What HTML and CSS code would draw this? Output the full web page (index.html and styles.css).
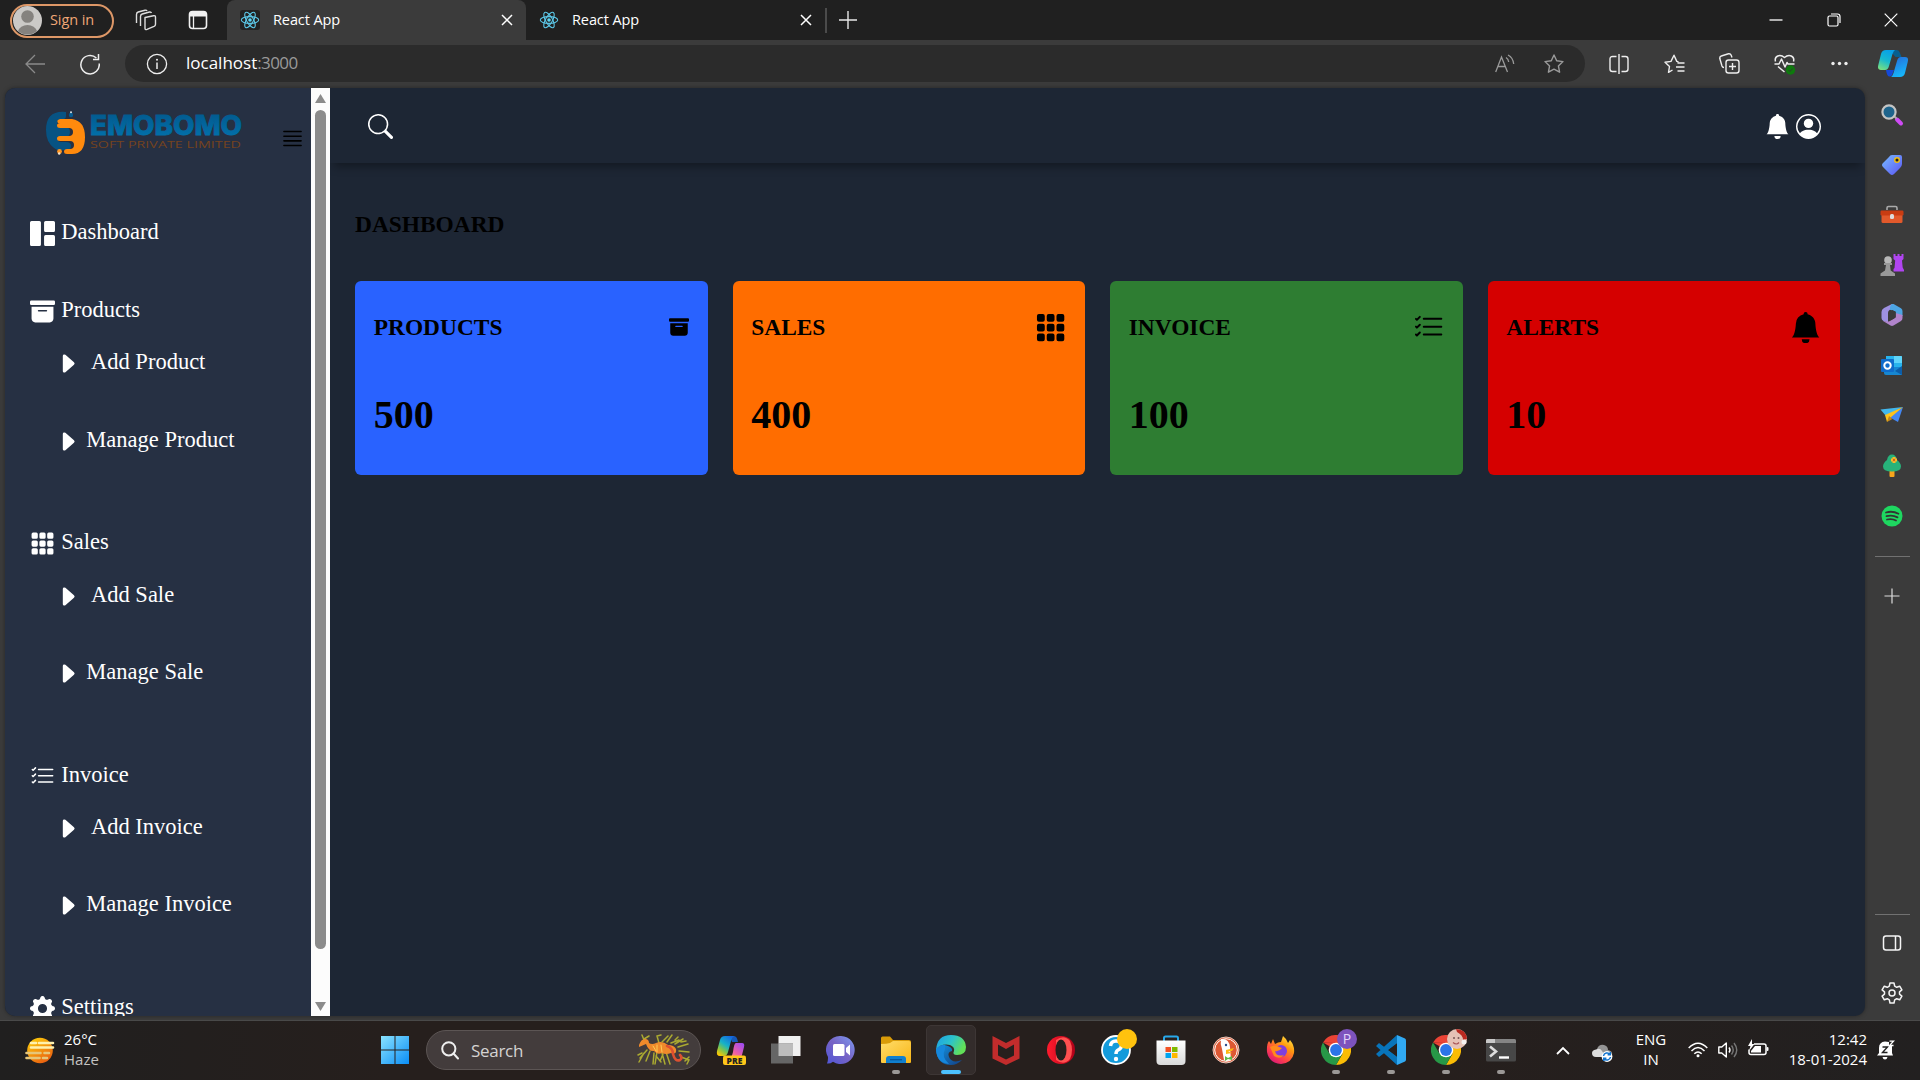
FILE: index.html
```html
<!DOCTYPE html>
<html lang="en">
<head>
<meta charset="utf-8">
<title>React App</title>
<link rel="stylesheet" href="styles.css">
</head>
<body>
<svg class="defs" width="0" height="0" aria-hidden="true">
  <defs>
    <linearGradient id="g-win" x2="1" y2="1"><stop stop-color="#8ae3ff"/><stop offset="1" stop-color="#0a8df5"/></linearGradient>
    <linearGradient id="g-teal" x1=".6" x2=".2" y2="1"><stop stop-color="#08a0e9"/><stop offset=".5" stop-color="#17b9cf"/><stop offset="1" stop-color="#7ae07f"/></linearGradient>
    <linearGradient id="g-blue" x2=".4" y2="1"><stop stop-color="#2668d8"/><stop offset="1" stop-color="#17b5fa"/></linearGradient>
    <linearGradient id="g-pre1" x1=".8" x2=".2" y2="1"><stop stop-color="#1466e0"/><stop offset=".45" stop-color="#16b2c8"/><stop offset=".7" stop-color="#75c455"/><stop offset="1" stop-color="#ffc800"/></linearGradient>
    <linearGradient id="g-pre2" x1=".8" x2=".1" y2="1"><stop stop-color="#a04cf0"/><stop offset=".6" stop-color="#ee5fa4"/><stop offset="1" stop-color="#ff9a6b"/></linearGradient>
    <linearGradient id="g-tag" x2="1" y2="1"><stop stop-color="#78bdff"/><stop offset="1" stop-color="#5b54f4"/></linearGradient>
    <linearGradient id="g-sun" x2=".6" y2="1"><stop stop-color="#ffd60a"/><stop offset="1" stop-color="#ea6210"/></linearGradient>
    <linearGradient id="g-chat" x1="1" x2="0" y2="1"><stop stop-color="#7c9bf2"/><stop offset=".5" stop-color="#7763c5"/><stop offset="1" stop-color="#4f56d8"/></linearGradient>
    <linearGradient id="g-folder" x2="1" y2="1"><stop stop-color="#ffdc6a"/><stop offset="1" stop-color="#f8b616"/></linearGradient>
    <linearGradient id="g-edge" x2="1" y2=".4"><stop stop-color="#1c9fe8"/><stop offset=".55" stop-color="#2dc3c9"/><stop offset="1" stop-color="#62e058"/></linearGradient>
    <linearGradient id="g-edge2" x2="1" y2="1"><stop stop-color="#1596e2"/><stop offset="1" stop-color="#123f85"/></linearGradient>
    <linearGradient id="g-opera" x2="1"><stop stop-color="#ff1b2d"/><stop offset="1" stop-color="#b00018"/></linearGradient>
    <linearGradient id="g-fox" x1=".9" x2=".2" y2="1"><stop stop-color="#fff04a"/><stop offset=".35" stop-color="#ff980e"/><stop offset=".7" stop-color="#ff3f4c"/><stop offset="1" stop-color="#d4147c"/></linearGradient>
    <linearGradient id="g-store" x2="0" y2="1"><stop stop-color="#fff"/><stop offset="1" stop-color="#dadada"/></linearGradient>
    <linearGradient id="g-logo" x2="0" y2="1"><stop stop-color="#02568a"/><stop offset="1" stop-color="#0275b0"/></linearGradient>

    <symbol id="react" viewBox="0 0 20 20"><g fill="none" stroke="#5cc8e8" stroke-width="1.1"><ellipse cx="10" cy="10" rx="8.7" ry="3.4"/><ellipse cx="10" cy="10" rx="8.7" ry="3.4" transform="rotate(60 10 10)"/><ellipse cx="10" cy="10" rx="8.7" ry="3.4" transform="rotate(120 10 10)"/></g><circle cx="10" cy="10" r="1.8" fill="#5cd8f5"/></symbol>
    <symbol id="close" viewBox="0 0 12 12"><path d="M1 1l10 10M11 1L1 11" fill="none" stroke="currentColor" stroke-width="1.5"/></symbol>
    <symbol id="archive" viewBox="0 0 16 16"><path d="M12.643 15C13.979 15 15 13.845 15 12.5V5H1v7.500C1 13.845 2.021 15 3.357 15zM5.500 7h5a.5.5 0 0 1 0 1h-5a.5.5 0 0 1 0-1M.8 1a.8.8 0 0 0-.8.8V3a.8.8 0 0 0 .8.8h14.400A.8.8 0 0 0 16 3V1.800a.8.8 0 0 0-.8-.8z"/></symbol>
    <symbol id="grid" viewBox="0 0 16 16"><path d="M1 2a1 1 0 0 1 1-1h2a1 1 0 0 1 1 1v2a1 1 0 0 1-1 1H2a1 1 0 0 1-1-1zm5 0a1 1 0 0 1 1-1h2a1 1 0 0 1 1 1v2a1 1 0 0 1-1 1H7a1 1 0 0 1-1-1zm5 0a1 1 0 0 1 1-1h2a1 1 0 0 1 1 1v2a1 1 0 0 1-1 1h-2a1 1 0 0 1-1-1zM1 7a1 1 0 0 1 1-1h2a1 1 0 0 1 1 1v2a1 1 0 0 1-1 1H2a1 1 0 0 1-1-1zm5 0a1 1 0 0 1 1-1h2a1 1 0 0 1 1 1v2a1 1 0 0 1-1 1H7a1 1 0 0 1-1-1zm5 0a1 1 0 0 1 1-1h2a1 1 0 0 1 1 1v2a1 1 0 0 1-1 1h-2a1 1 0 0 1-1-1zM1 12a1 1 0 0 1 1-1h2a1 1 0 0 1 1 1v2a1 1 0 0 1-1 1H2a1 1 0 0 1-1-1zm5 0a1 1 0 0 1 1-1h2a1 1 0 0 1 1 1v2a1 1 0 0 1-1 1H7a1 1 0 0 1-1-1zm5 0a1 1 0 0 1 1-1h2a1 1 0 0 1 1 1v2a1 1 0 0 1-1 1h-2a1 1 0 0 1-1-1z"/></symbol>
    <symbol id="listcheck" viewBox="0 0 16 16"><path fill-rule="evenodd" d="M5 11.500a.5.5 0 0 1 .5-.5h9a.5.5 0 0 1 0 1h-9a.5.5 0 0 1-.5-.5m0-4a.5.5 0 0 1 .5-.5h9a.5.5 0 0 1 0 1h-9a.5.5 0 0 1-.5-.5m0-4a.5.5 0 0 1 .5-.5h9a.5.5 0 0 1 0 1h-9a.5.5 0 0 1-.5-.5M3.854 2.146a.5.5 0 0 1 0 .708l-1.500 1.500a.5.5 0 0 1-.708 0l-.5-.5a.5.5 0 1 1 .708-.708L2 3.293l1.146-1.147a.5.5 0 0 1 .708 0m0 4a.5.5 0 0 1 0 .708l-1.500 1.500a.5.5 0 0 1-.708 0l-.5-.5a.5.5 0 1 1 .708-.708L2 7.293l1.146-1.147a.5.5 0 0 1 .708 0m0 4a.5.5 0 0 1 0 .708l-1.500 1.500a.5.5 0 0 1-.708 0l-.5-.5a.5.5 0 0 1 .708-.708l.146.147 1.146-1.147a.5.5 0 0 1 .708 0"/></symbol>
    <symbol id="bell" viewBox="0 0 16 16"><path d="M8 16a2 2 0 0 0 2-2H6a2 2 0 0 0 2 2m.995-14.901a1 1 0 1 0-1.990 0A5 5 0 0 0 3 6c0 1.098-.5 6-2 7h14c-1.500-1-2-5.902-2-7 0-2.420-1.720-4.440-4.005-4.901"/></symbol>
    <symbol id="caret" viewBox="0 0 16 16"><path d="m12.140 8.753-5.482 4.796c-.646.566-1.658.106-1.658-.753V3.204a1 1 0 0 1 1.659-.753l5.480 4.796a1 1 0 0 1 0 1.506z"/></symbol>
    <symbol id="star" viewBox="0 0 20 20"><path d="M10 1l2.700 5.800 6.300.8-4.600 4.300 1.200 6.300L10 15.100l-5.600 3.100 1.200-6.300L1 7.600l6.300-.8z" fill="none" stroke="currentColor" stroke-width="1.400" stroke-linejoin="round"/></symbol>
    <symbol id="chrome" viewBox="0 0 30 30"><path d="M2 7.500A15 15 0 0 1 28 7.500L15 8z" fill="#ea4335"/><path d="M28 7.500A15 15 0 0 1 15 30L21.500 18.700 15 7.500z" fill="#fbbc05"/><path d="M15 30A15 15 0 0 1 2 7.500l6.600 11.300 12.800 0z" fill="#279847"/><path d="M2 7.500h26L15 15z" fill="#ea4335"/><circle cx="15" cy="15" r="7.300" fill="#fff"/><circle cx="15" cy="15" r="5.900" fill="#2b74e8"/></symbol>
  </defs>
</svg>

<div class="screen">
  <header class="tabs">
    <div class="signin"><svg width="29" height="29" viewBox="0 0 29 29"><circle cx="14.500" cy="14.500" r="14.500" fill="#cbc9c7"/><circle cx="14.500" cy="10.500" r="6.300" fill="#85827f"/><path d="M5 25a9.700 7.500 0 0 1 19 0 14.500 14.500 0 0 1-19 0" fill="#85827f"/></svg><span>Sign in</span></div>
    <svg class="workspaces" width="22" height="22" viewBox="0 0 22 22" fill="none" stroke="#ddd" stroke-width="1.400" stroke-linejoin="round"><path d="M10 8.500l8.500-1.800q2-.3 2 1.500v7q0 1.500-1.500 2.200l-7 3q-2 .7-2-1.200zM5.500 17V7.500q0-2 1.700-2.500L14.500 3q1.500-.3 2 1M1.500 14V5.500q0-2 1.700-2.500L10 1.200q1.500-.3 2 .8"/></svg>
    <svg class="tabmenu" width="20" height="20" viewBox="0 0 20 20"><rect x="1.500" y="1.500" width="17" height="17" rx="3" fill="none" stroke="#f2f2f2" stroke-width="1.600"/><path d="M1.500 6.500V4q0-2.500 2.500-2.500h12q2.500 0 2.500 2.500v2.500z" fill="#f2f2f2"/><path d="M5.500 6v12" stroke="#f2f2f2" stroke-width="1.300"/></svg>
    <div class="tab active"><svg class="favicon boxed"><use href="#react"/></svg><span>React App</span><svg class="x"><use href="#close"/></svg></div>
    <div class="tab"><svg class="favicon"><use href="#react"/></svg><span>React App</span><svg class="x"><use href="#close"/></svg></div>
    <i class="tabsep"></i>
    <svg class="newtab" width="18" height="18" viewBox="0 0 18 18"><path d="M9 0v18M0 9h18" stroke="#e8e8e8" stroke-width="1.400"/></svg>
    <div class="winbtns">
      <svg viewBox="0 0 14 14"><path d="M.5 7h13" stroke="#fff" stroke-width="1.300"/></svg>
      <svg viewBox="0 0 14 14" fill="none" stroke="#fff" stroke-width="1.200"><rect x="1" y="3" width="10" height="10" rx="1.500"/><path d="M4 1h6.500Q13 1 13 3.500V10"/></svg>
      <svg viewBox="0 0 14 14"><path d="M.7.7l12.600 12.600M13.300.7L.7 13.300" stroke="#fff" stroke-width="1.200"/></svg>
    </div>
  </header>

  <div class="toolbar">
    <svg class="back" width="20" height="20" viewBox="0 0 20 20" fill="none" stroke="#8a8a8a" stroke-width="1.300"><path d="M20 10H1M10 1l-9 9 9 9"/></svg>
    <svg class="reload" width="20" height="22" viewBox="0 0 20 22" fill="none" stroke="#eee" stroke-width="1.500"><path d="M19.200 10.500A9.200 9.200 0 1 1 16.400 5M18.500 1v5.500H13"/></svg>
    <div class="address">
      <svg class="info" width="22" height="22" viewBox="0 0 22 22"><circle cx="11" cy="11" r="9.600" fill="none" stroke="#eee" stroke-width="1.300"/><path d="M11 9.500V16" stroke="#eee" stroke-width="1.500"/><circle cx="11" cy="6.800" r="1" fill="#eee"/></svg>
      <span class="host">localhost</span><span class="port">:3000</span>
      <svg class="read" width="20" height="20" viewBox="0 0 20 20" fill="none" stroke="#9a9a9a" stroke-width="1.300"><path d="M.7 18L6.500 3l6 15M2.700 12.500h7.600M11 3.500q2.500 1.500 2.700 4.500M13 1q5 2.500 5.700 9"/></svg>
      <svg class="addstar"><use href="#star"/></svg>
    </div>
    <svg class="split" width="20" height="20" viewBox="0 0 20 20" fill="none" stroke="#eee" stroke-width="1.400"><path d="M7.500 2.500H3.500Q1 2.500 1 5v10q0 2.500 2.500 2.500h4M12.500 2.500h4Q19 2.500 19 5v10q0 2.500-2.500 2.500h-4M10 0v20"/></svg>
    <svg class="favs" width="21" height="20" viewBox="0 0 21 20" fill="none" stroke="#eee" stroke-width="1.400" stroke-linejoin="round"><path d="M8.500 16L4.500 18.300l1-5.800-4.500-4.300 6-.8L10 1.200l2.800 6.200 1.700.3M13.500 9H20.500M12 13h8.500M13.500 17h7"/></svg>
    <svg class="coll" width="21" height="21" viewBox="0 0 21 21" fill="none" stroke="#eee" stroke-width="1.400"><rect x="7" y="7" width="13" height="13" rx="2.500"/><path d="M13.500 10v7M10 13.500h7M5 14.500q-1.500 0-2-1.500L.8 5.500Q.5 3.500 2.300 3L9.500.8q2-.3 2.700 1.400l.8 2.300"/></svg>
    <svg class="health" width="22" height="22" viewBox="0 0 22 22" fill="none" stroke="#eee" stroke-width="1.500" stroke-linejoin="round"><path d="M1.500 8.500C0 3 6 .5 10.500 4.500 15 .5 21 3 19.500 8.500M.5 11H5l2.500-5 3.500 8 2-4.500 1 1.500h6.500M4 13.500l6.500 5.500"/><circle cx="16.500" cy="17" r="4.700" fill="#0e7a0d" stroke="none"/><path d="M14.500 17l1.500 1.500 2.700-3" stroke="#2b402b" stroke-width="1"/></svg>
    <svg class="dots" width="17" height="5" viewBox="0 0 17 5" fill="#eee"><circle cx="2" cy="2.500" r="1.700"/><circle cx="8.500" cy="2.500" r="1.700"/><circle cx="15" cy="2.500" r="1.700"/></svg>
    <svg class="copilot" width="30" height="27" viewBox="0 0 30 27"><path d="M16 0h3q2 0 3 3l1.500 4h-6L14 3z" fill="#075f8f"/><path d="M8 20h8l-2 5q-1 2-3 1.500Q9 26 8 20" fill="#1549d8"/><path d="M8 0h9q-1.500 1-2.500 4L11 16q-1 4-4 4H3q-4 0-2.700-5L3 4Q4 0 8 0" fill="url(#g-teal)"/><path d="M22 27h-9q1.500-1 2.500-4L19 11q1-4 4-4h4q4 0 2.700 5L27 23q-1 4-5 4" fill="url(#g-blue)"/></svg>
  </div>

  <div class="body">
    <div class="page">
      <aside class="sidebar">
        <div class="brand">
          <svg width="198" height="46" viewBox="0 0 198 46">
            <path d="M20 1q-20-2-20 18 0 12 8 18 5 4 9 2h3q5 0 5-4t-5-4h-5q-3 0-3-2.500T15 26h4q5 0 5-5t-5-5h-5q-3 0-3-2.500T14 8q6 1 6-3z" fill="#075383"/>
            <path d="M14 8h12q13 2 13 18 0 17-13 17h-5q-3 0-3-2.500t3-2.500h3q4 0 4-4t-4-4H14q-3 0-3-2.500t3-2.500h9q4 0 4-4t-4-4h-9q-3 0-3-2.500T14 12h-2q-2-3 2-4" fill="#ff8a0d"/>
            <circle cx="25" cy="4" r="2.200" fill="#065b91"/><circle cx="25" cy="1.300" r="1" fill="#dbe7ed"/><circle cx="13.500" cy="40.500" r="2.400" fill="#ff9420"/><circle cx="13.200" cy="42.500" r="1.200" fill="#f5e2c9"/>
            <text class="logo-name" x="44" y="24" textLength="152" lengthAdjust="spacingAndGlyphs" fill="url(#g-logo)" stroke="url(#g-logo)">EMOBOMO</text>
            <text class="logo-sub" x="44" y="36.700" textLength="151" lengthAdjust="spacingAndGlyphs">SOFT PRIVATE LIMITED</text>
          </svg>
          <svg class="burger" viewBox="0 0 16 16"><path d="M2.500 3.500h11M2.500 6.500h11M2.500 9.500h11M2.500 12.500h11" stroke="#000" stroke-linecap="round"/></svg>
        </div>
        <ul class="menu">
          <li class="item"><svg viewBox="0 0 16 16"><path d="M0 1a1 1 0 0 1 1-1h5a1 1 0 0 1 1 1v14a1 1 0 0 1-1 1H1a1 1 0 0 1-1-1zm9 0a1 1 0 0 1 1-1h5a1 1 0 0 1 1 1v5a1 1 0 0 1-1 1h-5a1 1 0 0 1-1-1zm0 9a1 1 0 0 1 1-1h5a1 1 0 0 1 1 1v5a1 1 0 0 1-1 1h-5a1 1 0 0 1-1-1z"/></svg><span>Dashboard</span></li>
          <li class="item first"><svg><use href="#archive"/></svg><span>Products</span></li>
          <li class="item sub add"><svg><use href="#caret"/></svg><span>Add Product</span></li>
          <li class="item sub"><svg><use href="#caret"/></svg><span>Manage Product</span></li>
          <li class="item group"><svg><use href="#grid"/></svg><span>Sales</span></li>
          <li class="item sub add"><svg><use href="#caret"/></svg><span>Add Sale</span></li>
          <li class="item sub"><svg><use href="#caret"/></svg><span>Manage Sale</span></li>
          <li class="item group"><svg><use href="#listcheck"/></svg><span>Invoice</span></li>
          <li class="item sub add"><svg><use href="#caret"/></svg><span>Add Invoice</span></li>
          <li class="item sub"><svg><use href="#caret"/></svg><span>Manage Invoice</span></li>
          <li class="item group"><svg viewBox="0 0 16 16"><path d="M9.405 1.050c-.413-1.400-2.397-1.400-2.810 0l-.1.340a1.464 1.464 0 0 1-2.105.872l-.310-.170c-1.283-.698-2.686.705-1.987 1.987l.169.311c.446.820.023 1.841-.872 2.105l-.340.100c-1.400.413-1.400 2.397 0 2.810l.340.100a1.464 1.464 0 0 1 .872 2.105l-.170.310c-.698 1.283.705 2.686 1.987 1.987l.311-.169a1.464 1.464 0 0 1 2.105.872l.100.340c.413 1.400 2.397 1.400 2.810 0l.100-.340a1.464 1.464 0 0 1 2.105-.872l.310.170c1.283.698 2.686-.705 1.987-1.987l-.169-.311a1.464 1.464 0 0 1 .872-2.105l.340-.100c1.400-.413 1.400-2.397 0-2.810l-.340-.100a1.464 1.464 0 0 1-.872-2.105l.170-.310c.698-1.283-.705-2.686-1.987-1.987l-.311.169a1.464 1.464 0 0 1-2.105-.872zM8 10.930a2.929 2.929 0 1 1 0-5.860 2.929 2.929 0 0 1 0 5.858z"/></svg><span>Settings</span></li>
        </ul>
      </aside>
      <div class="scrollbar"><i class="arrow up"></i><i class="thumb"></i><i class="arrow down"></i></div>
      <section class="content">
        <header class="apphead">
          <svg viewBox="0 0 16 16"><path d="M11.742 10.344a6.500 6.500 0 1 0-1.397 1.398h-.001q.044.060.098.115l3.850 3.850a1 1 0 0 0 1.415-1.414l-3.850-3.850a1 1 0 0 0-.115-.100zM12 6.500a5.500 5.500 0 1 1-11 0 5.500 5.500 0 0 1 11 0"/></svg>
          <div class="userbox">
            <svg><use href="#bell"/></svg>
            <svg viewBox="0 0 16 16"><path d="M11 6a3 3 0 1 1-6 0 3 3 0 0 1 6 0"/><path fill-rule="evenodd" d="M0 8a8 8 0 1 1 16 0A8 8 0 0 1 0 8m8-7a7 7 0 0 0-5.468 11.370C3.242 11.226 4.805 10 8 10s4.757 1.225 5.468 2.370A7 7 0 0 0 8 1"/></svg>
          </div>
        </header>
        <main>
          <h3>DASHBOARD</h3>
          <div class="cards">
            <article class="card blue"><div class="cardhead"><h3>PRODUCTS</h3><svg class="small"><use href="#archive"/></svg></div><h1>500</h1></article>
            <article class="card orange"><div class="cardhead"><h3>SALES</h3><svg><use href="#grid"/></svg></div><h1>400</h1></article>
            <article class="card green"><div class="cardhead"><h3>INVOICE</h3><svg><use href="#listcheck"/></svg></div><h1>100</h1></article>
            <article class="card red"><div class="cardhead"><h3>ALERTS</h3><svg><use href="#bell"/></svg></div><h1>10</h1></article>
          </div>
        </main>
      </section>
    </div>

    <nav class="edgebar">
      <div class="cell"><svg viewBox="0 0 24 24"><path d="M17 16.500l4 4" stroke="#cf4bf5" stroke-width="4" stroke-linecap="round"/><path d="M14 13l2.500 2.500" stroke="#aaa" stroke-width="2"/><circle cx="9" cy="9" r="6.600" fill="#1e648c" stroke="#c4c4c4" stroke-width="2.200"/></svg></div>
      <div class="cell"><svg viewBox="0 0 24 24"><path d="M12 2h8q2 0 2 2v7q0 2-2 4l-6 6q-2 2-4 0l-7-7q-2-2 0-4l6-6q1-2 3-2" fill="url(#g-tag)"/><circle cx="17" cy="7" r="2.300" fill="#222" stroke="#f0bd16" stroke-width="1.500"/></svg></div>
      <div class="cell"><svg viewBox="0 0 24 24"><path d="M7 7V5q0-1.500 1.500-1.500h7Q17 3.500 17 5v2" fill="none" stroke="#aaa" stroke-width="1.600"/><rect x="1.500" y="10" width="21" height="10" rx="1.500" fill="#e2592b"/><rect x=".5" y="7.500" width="23" height="5" rx="1.200" fill="#c93c12"/><rect x="10" y="11" width="4" height="5" rx="1.500" fill="#ddd"/></svg></div>
      <div class="cell"><svg viewBox="0 0 24 24"><path d="M13.500 1h2v2h2V1h2v2h2V1h2v5l-1.500 1.500.7 7L24 17v1.500H13.500V16l1-1 .7-7.500L13.500 6z" fill="#b045f0"/><circle cx="8" cy="7" r="3.800" fill="#b8b8b8"/><path d="M4 10h8v2h-2l.7 5.500 4.300 3V23H.5v-2.500l4.500-3L6 12H4z" fill="#999"/></svg></div>
      <div class="cell"><svg viewBox="0 0 24 24"><path d="M12 1L4 5Q1.500 6.500 1.500 9v6q0 2 2 3l4.500 1.500V10q0-2 1.500-3L16 3.500 13.500 1.200q-.7-.5-1.500-.2" fill="#9e91e2"/><path d="M12 1q1-.3 2 .2l7 4q1.500 1 1.500 3V13l-7-2.500V8.500L10 6.700Q9.500 3 12 1" fill="#4da5e3"/><path d="M22.500 12v3q0 2-1.500 3l-7.500 4.500q-1.500.8-3 0L3 18l5 .5q1 .2 2-.4l5.500-3.300V10z" fill="#b184cc"/><path d="M9 9l3.500-2 3.300 2v5L12 16.500 9 14.500z" fill="#3b3b3b"/></svg></div>
      <div class="cell"><svg viewBox="0 0 24 24"><path d="M6 2h15q1 0 1 1v10H6z" fill="#28b4ed"/><path d="M14 2h7q1 0 1 1v6h-8z" fill="#5fd5fa"/><path d="M4 13h18v8H6q-2 0-2-2z" fill="#1687d2"/><path d="M22 12v9l-7-4z" fill="#0c5eaa"/><rect x="1" y="5" width="13" height="13" rx="1" fill="#0f6ccb"/><circle cx="7.500" cy="11.500" r="3.200" fill="none" stroke="#fff" stroke-width="2"/></svg></div>
      <div class="cell"><svg viewBox="0 0 24 24"><path d="M.5 5.500L23 3 6 12z" fill="#42b7ec"/><path d="M23 3L18 18 9 13z" fill="#4387f2"/><path d="M23 3L5 11l2 7 3-4z" fill="#ffc21a"/><path d="M7 18l2-6 3.500 3z" fill="#bf841c"/></svg></div>
      <div class="cell"><svg viewBox="0 0 24 24"><rect x="9.500" y="16" width="5" height="7" rx="1" fill="#f6a51d"/><path d="M12 .5q4 0 5 5.500 4 3 4 6.500 0 5-9 5t-9-5Q3 9 7 6q1-5.500 5-5.500" fill="#27b27a"/><path d="M14 3v6M11 6h6" stroke="#ffb629" stroke-width="3"/><circle cx="14" cy="6" r="1.200" fill="#c3691c"/></svg></div>
      <div class="cell"><svg viewBox="0 0 24 24"><circle cx="12" cy="12" r="10.500" fill="#1ed760"/><path d="M6 8.500q6.500-2 12.500 1.200M6.500 12.200q6-1.600 11 1.200M7 15.500q5-1.300 9 1" fill="none" stroke="#333" stroke-width="1.800" stroke-linecap="round"/></svg></div>
      <i class="rule"></i>
      <svg class="plus" width="16" height="16" viewBox="0 0 16 16"><path d="M8 .5v15M.5 8h15" stroke="#ddd" stroke-width="1.200"/></svg>
      <div class="edgebottom">
        <i class="rule"></i>
        <div class="cell"><svg viewBox="0 0 24 24" fill="none" stroke="#f5f5f5" stroke-width="1.500"><rect x="3.500" y="5" width="17" height="14" rx="2.500"/><path d="M15.500 5v14"/></svg></div>
        <div class="cell"><svg viewBox="0 0 24 24" fill="none" stroke="#f5f5f5" stroke-width="1.500" stroke-linejoin="round"><circle cx="12" cy="12" r="3"/><path d="M10 2h4l.7 3.200 2 1.100 3-1.100 2.200 3.700-2.400 2v2.200l2.400 2-2.200 3.700-3-1.100-2 1.100L14 22h-4l-.7-3.200-2-1.100-3 1.100-2.200-3.700 2.400-2v-2.200l-2.400-2 2.200-3.700 3 1.100 2-1.100z"/></svg></div>
      </div>
    </nav>
  </div>

  <footer class="taskbar">
    <div class="weather">
      <svg width="30" height="27" viewBox="0 0 30 27"><circle cx="15" cy="13.500" r="12.800" fill="url(#g-sun)"/><g stroke-width="2.600" stroke-linecap="round"><path d="M6 6h5M14 6h14M6 10.500h22" stroke="#fff1ad"/><path d="M1.500 16h14M19.500 16h4.500M1.500 21h13M18 21h4" stroke="#e6c679"/></g></svg>
      <div class="lines"><span>26°C</span><span class="dim">Haze</span></div>
    </div>
    <div class="apps">
      <div class="app"><svg viewBox="0 0 30 30"><path d="M1 1h13.500v13.500H1zM15.500 1H29v13.500H15.500zM1 15.500h13.500V29H1zM15.500 15.500H29V29H15.500z" fill="url(#g-win)"/></svg></div>
      <div class="search">
        <svg width="18" height="19" viewBox="0 0 18 19" fill="none" stroke="#eee" stroke-width="2"><circle cx="7.800" cy="7.800" r="6.600"/><path d="M12.500 12.500l4.500 5" stroke-linecap="round"/></svg>
        <span>Search</span>
        <svg class="dragon" width="54" height="32" viewBox="0 0 54 32" fill="none" stroke-linecap="round"><path d="M7 6L5 1M7 5l5-3M5 19l-4 2M10 16l-7 8M13 17l-4 10M7 19l-5 9M17 19l-1 11M20 18l-2 12M19 22l5 6M25 19l3 11M26 20l-3 7M29 18l4 12M22 9L20 2l4-1M25 8l6-6M30 8l5-7M34 9l8-3M38 10l8-5M41 13l10-3M42 17l10 1M44 23l8 3-2 4M48 27l4-4M38 6l3-3M44 8l5-1" stroke="#aaa931" stroke-width="1.500"/><path d="M2 11q2-6 6-6 4 0 4 4 3 2 7 0 6-3 12 2 6 0 8 4 1 6-5 4-5 2-9 0-5 2-8-2-5 1-8-7l-7 3z" fill="#ef8a2b"/><path d="M30 12q6 2 6 8 2 8 7 6 3-2 0-5" stroke="#dc5030" stroke-width="2.600"/><path d="M16 12l3 5M20 11v7M24 11l1 7" stroke="#ffcb55"/></svg>
      </div>
      <div class="app"><svg viewBox="0 0 30 30"><path d="M14 1h4q3 0 4 6h-6z" fill="#1558b8"/><path d="M9 1h9q-2 1-3 5l-3 11q-1 4-4 4H4q-4 0-3-5L4 5q1-4 5-4" fill="url(#g-pre1)"/><path d="M20 8h6q3 0 2 4l-2 8q-1 4-4 4h-8q2-2 3-7 1-9 3-9" fill="url(#g-pre2)"/><rect x="7" y="20.500" width="23" height="9.500" rx="2" fill="#ffc619"/><text class="pre" x="18.500" y="28.500" text-anchor="middle">PRE</text></svg></div>
      <div class="app"><svg viewBox="0 0 30 30"><rect x="7.500" y="1" width="22" height="20" fill="#f0f0f0"/><rect x="0" y="8.500" width="22" height="20" fill="#666"/><path d="M7.500 8.500H22V21H7.500z" fill="#bdbdbd"/></svg></div>
      <div class="app"><svg viewBox="0 0 30 30"><path d="M15 1a14 14 0 1 1-8 25.700Q4 29 1 28.500q1.200-3 1-6.500A14 14 0 0 1 15 1" fill="url(#g-chat)"/><rect x="7" y="9" width="11.500" height="12" rx="1.500" fill="#fff"/><path d="M20 13l4-3.500v11L20 17z" fill="#fff"/></svg></div>
      <div class="app"><svg viewBox="0 0 30 30"><path d="M0 3q0-1.500 1.500-1.500H9L12 5h16q2 0 2 2v8H0z" fill="#d99b08"/><path d="M0 9q6 0 9-1l3-2h16q2 0 2 2v19q0 1-1 1H1q-1 0-1-1z" fill="url(#g-folder)"/><path d="M5 28v-4q0-3 3-3h14q3 0 3 3v4z" fill="#1080cf"/><path d="M9 24.700h12" stroke="#08569b" stroke-width="1.300"/></svg><i class="dot"></i></div>
      <div class="app current"><svg viewBox="0 0 30 30"><path d="M0 15Q1 0 15 0t15 12q0 8-9 8-5 0-3-4 1-4-4-6-9-2-14 5" fill="url(#g-edge)"/><path d="M0 14q5-6 12-3 5 2 4 5-5 1-3 6 3 7 13 3-5 5-11 5Q1 30 0 14" fill="url(#g-edge2)"/><path d="M9 14q-4 8 4 15-12-1-13-14 3-5 9-5" fill="#1687dc"/></svg><i class="dot"></i></div>
      <div class="app"><svg viewBox="0 0 30 30"><path d="M1.500 1L15 8l13.500-7v22.500L15 30 1.500 23.500zM7 9.500v11l8 4 8-4v-11L15 14z" fill="#c22c2c" fill-rule="evenodd"/></svg></div>
      <div class="app"><svg viewBox="0 0 30 30"><circle cx="15" cy="15" r="14" fill="url(#g-opera)"/><path d="M10 5q8-6 14 1 4 9 0 18-6 7-14 1" fill="#ff5050"/><ellipse cx="15" cy="15" rx="5.500" ry="10.500" fill="#261f1d"/></svg></div>
      <div class="app"><svg viewBox="0 0 30 30"><circle cx="15" cy="15" r="14" fill="#149bdb" stroke="#fff" stroke-width="1.800"/><path d="M9.500 11q.5-5 5.500-5 5.500 0 5.500 4.500 0 3-3.500 4.500-2 1-2 4" fill="none" stroke="#fff" stroke-width="3.500"/><circle cx="15" cy="24" r="2.200" fill="#fff"/></svg><b class="badge yellow"></b></div>
      <div class="app"><svg viewBox="0 0 30 30"><path d="M8 7V3q0-1.500 1.500-1.500h11Q22 1.500 22 3v4" fill="none" stroke="#28a8ea" stroke-width="2"/><path d="M.5 5.500h29V26q0 4-4 4h-21q-4 0-4-4z" fill="url(#g-store)"/><path d="M9.500 12H15v5H9.500z" fill="#f25022"/><path d="M16 12h5.500v5H16z" fill="#7fba00"/><path d="M9.500 18H15v5H9.500z" fill="#00a4ef"/><path d="M16 18h5.500v5H16z" fill="#ffb900"/></svg></div>
      <div class="app"><svg viewBox="0 0 30 30"><circle cx="15" cy="15" r="13" fill="#de5833" stroke="#e8c9bd" stroke-width="1"/><circle cx="15" cy="15" r="11.300" fill="none" stroke="#fff" stroke-width="1"/><path d="M10 4q8-1 9 8l1 13q-5 2-7 0L11 14Q9 9 10 4" fill="#fff"/><path d="M15 15l8-2-2 3h-4l4 2-6 1z" fill="#fdb913"/><path d="M14 21l3 2 4-2v4l-4-1-3 2z" fill="#62b846"/><circle cx="15" cy="10" r="1.200" fill="#2d4f8e"/></svg></div>
      <div class="app"><svg viewBox="0 0 30 30"><path d="M7 4l2 5q3-2 6-2l2-6q4 3 5 7l2-3q5 6 4 13-2 10-13 11Q3 28 1 17 .5 9 3 6l2 3z" fill="url(#g-fox)"/><circle cx="15" cy="16" r="6" fill="#7f3fde"/><path d="M4 12q5-3 9 0l3 1q-3 4-7 3 1 6 9 4-4 5-10 1z" fill="#ff8a1c"/></svg></div>
      <div class="app"><svg><use href="#chrome"/></svg><b class="badge purple">P</b><i class="dot"></i></div>
      <div class="app"><svg viewBox="0 0 30 30"><path d="M3 8l18.500 14v-14L3 22l-3-3L21 0v30L0 11z" fill="#0874ba"/><path d="M21 0l8 3.500q1 .5 1 2v19q0 1.500-1 2L21 30z" fill="#31a9f2"/><path d="M21 8.500v13L12.500 15z" fill="#261f1d"/></svg><i class="dot"></i></div>
      <div class="app"><svg><use href="#chrome"/></svg><b class="badge face"><svg viewBox="0 0 20 20"><circle cx="10" cy="10" r="10" fill="#e5c1b5"/><path d="M9 0q10 0 11 10l-4 1q0-5-6-8" fill="#bb2920"/><circle cx="7" cy="9" r="1" fill="#755"/><circle cx="11.500" cy="9" r="1" fill="#755"/><path d="M6 13.500q3.500 3 6 0" fill="none" stroke="#a55" stroke-width="1.200"/><circle cx="17" cy="13" r="2.500" fill="#f4f0ee"/></svg></b><i class="dot"></i></div>
      <div class="app"><svg viewBox="0 0 30 30"><rect x="0" y="4" width="30" height="22.500" rx="1.500" fill="#474747"/><path d="M0 8V5.500Q0 4 1.500 4h27Q30 4 30 5.500V8z" fill="#858585"/><path d="M0 8V5.500Q0 4 1.500 4H9v4z" fill="#c8c8c8"/><path d="M4 11.500l6 5-6 5" fill="none" stroke="#ddd" stroke-width="2.600"/><path d="M13 22.500h10" stroke="#fff" stroke-width="2.400"/></svg><i class="dot"></i></div>
    </div>
    <div class="tray">
      <svg width="14" height="9" viewBox="0 0 14 9"><path d="M1 8l6-6 6 6" fill="none" stroke="#fff" stroke-width="1.800"/></svg>
      <svg class="cloud" width="21" height="18" viewBox="0 0 21 18"><path d="M5 5q2-5 7-4 4 1 4 5 5 1 4 5l-8 2z" fill="#949494"/><path d="M4 13q-4 0-4-4 0-3 4-3.500Q8 3.500 10 7l4 6z" fill="#ddd"/><circle cx="15" cy="12.500" r="5.400" fill="#fff"/><path d="M11.500 12a3.600 3.600 0 0 1 6.500-1.500M18.500 13a3.600 3.600 0 0 1-6.500 1.500M18.300 8v2.700h-2.700M11.700 17v-2.700h2.700" fill="none" stroke="#1273cd" stroke-width="1.500"/></svg>
      <div class="lines lang"><span>ENG</span><span>IN</span></div>
      <svg class="wifi" width="20" height="16" viewBox="0 0 20 16" fill="none" stroke="#fff" stroke-width="1.500"><path d="M.7 6Q10-3.500 19.300 6M3.500 9Q10 2.200 16.500 9M6.300 11.700q3.700-3.500 7.400 0"/><circle cx="10" cy="13.700" r="1.500" fill="#fff" stroke="none"/></svg>
      <svg class="sound" width="20" height="18" viewBox="0 0 20 18" fill="none" stroke="#fff" stroke-width="1.400" stroke-linejoin="round"><path d="M.8 6v6h3l4.500 4V2L3.800 6zM11 6.500q2 2.500 0 5"/><path d="M13.500 4.500q3.500 4.500 0 9M16 2q5.500 7 0 14" stroke="#777"/></svg>
      <svg class="battery" width="21" height="18" viewBox="0 0 21 18"><path d="M6 5h10q2 0 2 2v6.500q0 2-2 2H3q-2 0-2-2v-3" fill="none" stroke="#fff" stroke-width="1.500"/><path d="M7 7h6v6.500H3V12z" fill="#fff"/><path d="M4 0L0 7h2.500L1 12l5.500-7H4z" fill="#fff"/><rect x="18.500" y="8" width="2" height="4" rx="1" fill="#fff"/></svg>
      <div class="lines clock"><span>12:42</span><span>18-01-2024</span></div>
      <svg class="dnd" width="18" height="20" viewBox="0 0 18 20"><path d="M2 8q0-6 6-6.500l4 .5v4h3v7l1 2.500H0L2 13z" fill="#fff"/><path d="M5.500 17h5q-.5 2.500-2.500 2.500T5.500 17" fill="#fff"/><path d="M5.500 7h5l-5 5.500h5" fill="none" stroke="#222" stroke-width="1.400"/><path d="M12.500 1.200h4l-4 4.300h4" fill="none" stroke="#fff" stroke-width="1.300"/></svg>
    </div>
  </footer>
</div>
</body>
</html>
```

FILE: styles.css
```css
* { box-sizing: border-box; }
body { margin: 0; background: #3b3b3b; font-family: "Open Sans", "Noto Sans", sans-serif; color: #fff; overflow: hidden; }
svg { display: block; flex: none; }
i { display: block; }
.defs { position: absolute; }
.screen { width: 1920px; height: 1080px; display: flex; flex-direction: column; }

/* Tab strip */
.tabs { height: 40px; background: #202020; display: flex; align-items: center; padding-left: 10px; font-size: 14.5px; letter-spacing: -.1px; }
.signin { width: 104px; height: 34px; margin-top: 1px; border: 2px solid #dd9767; border-radius: 17px; display: flex; align-items: center; gap: 8px; padding-left: 1px; color: #efa676; white-space: nowrap; }
.signin span { margin-top: -3px; }
.workspaces { margin-left: 21px; }
.tabmenu { margin-left: 31px; }
.tab { width: 299px; height: 40px; display: flex; align-items: center; padding: 0 13px; }
.tab.active { margin-left: 19px; background: #3b3b3b; border-radius: 8px 8px 0 0; }
.favicon { width: 20px; height: 20px; margin-right: 13px; }
.favicon.boxed { background: #222; border-radius: 3px; }
.tab span { flex: 1; margin-top: -2px; }
.x { width: 12px; height: 12px; }
.tabsep { width: 2px; height: 25px; background: #4b4b4b; }
.newtab { margin-left: 12px; margin-top: -1px; }
.winbtns { margin-left: auto; display: flex; gap: 43.500px; padding-right: 22px; }
.winbtns svg { width: 14px; height: 14px; margin-top: -1px; }

/* Toolbar */
.toolbar { height: 48px; background: #3b3b3b; display: flex; align-items: center; padding: 0 12px 1px 25px; }
.reload { margin-left: 35px; }
.address { width: 1460px; height: 37px; margin-left: 25px; background: #2b2b2b; border-radius: 19px; display: flex; align-items: center; padding-left: 21px; font-size: 17px; }
.host { margin: -2px 0 0 18px; }
.port { margin-top: -2px; letter-spacing: -.6px; color: #9a9a9a; }
.read { margin-left: auto; color: #9a9a9a; }
.addstar { width: 20px; height: 20px; margin: 0 21px 0 29px; color: #9a9a9a; }
.split { margin-left: 24px; }
.favs { margin-left: 35px; }
.coll { margin-left: 34px; }
.health { margin-left: 34px; }
.dots { margin-left: 35px; }
.copilot { margin-left: auto; }

/* Viewport */
.body { height: 933px; display: flex; padding-left: 5px; background: #3b3b3b; border-bottom: 1px solid #4a4a4a; }
.page { width: 1860px; height: 928px; display: flex; border-radius: 10px; overflow: hidden; background: #1d2634; font-family: "Liberation Serif", serif; box-shadow: 0 0 4px rgba(0,0,0,.35); }
.sidebar { width: 306px; background: #263043; overflow: hidden; }
.brand { height: 130px; padding: 23px 6px 0 41px; display: flex; justify-content: space-between; align-items: flex-start; }
.burger { width: 25px; height: 25px; margin-top: 15px; }
.logo-name { font: 800 27px "Inter", sans-serif; stroke-width: .8; }
.logo-sub { font: 9.500px "Open Sans", sans-serif; fill: #75431e; }
.menu { list-style: none; margin: 0; padding: 0 0 0 25px; font-size: 22.500px; }
.item { height: 26px; display: flex; align-items: center; line-height: 26px; white-space: nowrap; }
.item svg { width: 25px; height: 25px; margin: 5px 6.300px 0 0; fill: #fff; }
.item span { margin-top: 2px; }
.item.first { margin-top: 52px; }
.item.sub { margin-top: 51.500px; padding-left: 25px; }
.item.sub.add { margin-top: 26.250px; }
.item.add svg { margin-right: 11px; }
.item.group { margin-top: 76.500px; }
.scrollbar { width: 19px; background: #fcfcfc; display: flex; flex-direction: column; align-items: center; padding: 6px 0 5px; }
.arrow { width: 11px; height: 9px; background: #8b8b8b; }
.arrow.up { clip-path: polygon(50% 0, 100% 100%, 0 100%); }
.arrow.down { clip-path: polygon(0 0, 100% 0, 50% 100%); margin-top: auto; }
.thumb { width: 11px; height: 839px; margin-top: 7px; border-radius: 6px; background: #8b8b8b; }
.content { flex: 1; overflow: hidden; }
.apphead { height: 75px; padding: 0 44px 0 38px; display: flex; align-items: center; justify-content: space-between; box-shadow: 0 7.500px 9px -4px rgba(0,0,0,.36); }
.apphead svg { width: 25px; height: 25px; fill: #fff; margin-top: 2px; }
.userbox { display: flex; gap: 6px; }
h1, h3 { margin: 0; color: #000; }
h3 { font-size: 23.400px; line-height: 26px; }
h1 { font-size: 40px; line-height: 44px; margin-top: 50px; }
main { padding: 48px 25px 0; }
.cards { margin-top: 44px; display: grid; grid-template-columns: repeat(4, 1fr); gap: 25px; }
.card { height: 194px; border-radius: 6px; padding: 31px 18.750px 0; }
.cardhead { height: 31px; display: flex; align-items: center; justify-content: space-between; }
.cardhead h3 { margin-top: -2px; }
.cardhead svg { width: 31.250px; height: 31.250px; fill: #000; }
.cardhead svg.small { width: 20px; height: 20px; margin-top: -2px; }
.blue { background: #2962ff; }
.orange { background: #ff6d00; }
.green { background: #2e7d32; }
.red { background: #d50000; }

/* Browser side rail */
.edgebar { width: 55px; display: flex; flex-direction: column; align-items: center; padding: 2px 1px 0 0; }
.cell { height: 50.100px; display: flex; align-items: center; }
.cell svg { width: 24px; height: 24px; }
.rule { width: 35px; height: 1px; background: #717171; }
.edgebar > .rule { margin-top: 15px; }
.plus { margin-top: 31px; }
.edgebottom { margin-top: auto; padding-bottom: 2px; display: flex; flex-direction: column; align-items: center; }
.edgebottom .rule { margin-bottom: 3px; }

/* Taskbar */
.taskbar { height: 59px; padding-bottom: 1px; background: linear-gradient(90deg, #201f1f, #261f1d 20%, #261f1d 75%, #222020); display: flex; align-items: center; }
.weather { width: 370px; padding-left: 25px; display: flex; gap: 9px; align-items: center; }
.lines { display: flex; flex-direction: column; font-size: 15px; line-height: 20px; white-space: nowrap; margin-top: -2px; }
.dim { color: #c4c2c1; }
.apps { display: flex; gap: 5px; align-items: center; }
.app { position: relative; width: 50px; height: 50px; display: flex; align-items: center; justify-content: center; border-radius: 5px; }
.app > svg { width: 30px; height: 30px; }
.current { background: #332c2b; border: 1px solid #3d3635; }
.dot { position: absolute; left: 21px; bottom: 1px; width: 8px; height: 4px; border-radius: 2px; background: #9b9896; }
.current .dot { left: 14px; bottom: 0; width: 20px; background: #4cc2ff; }
.badge { position: absolute; right: 4px; top: 4px; width: 20px; height: 20px; border-radius: 50%; text-align: center; font: 14px/20px "Open Sans", sans-serif; }
.yellow { background: #ffc20e; }
.purple { background: #7d53bd; color: #e3d5fa; }
.search { width: 275px; height: 40px; margin-left: 1px; border-radius: 20px; background: #433c3c; border: 1px solid #5c5554; display: flex; align-items: center; padding: 0 9px 0 14px; font-size: 17px; letter-spacing: -.3px; color: #d5d3d2; }
.search span { margin-left: 12px; }
.dragon { margin-left: auto; }
.pre { font: 800 8.500px "Open Sans", sans-serif; fill: #222; }
.tray { margin-left: auto; padding-right: 25px; display: flex; align-items: center; }
.cloud { margin: 6px 24px 0 22px; }
.lang { align-items: center; width: 28px; }
.wifi { margin-left: 23px; }
.sound { margin-left: 10px; }
.battery { margin-left: 10px; margin-top: -4px; }
.clock { margin-left: 19px; width: 79px; align-items: flex-end; }
.dnd { margin-left: 10px; }
```
